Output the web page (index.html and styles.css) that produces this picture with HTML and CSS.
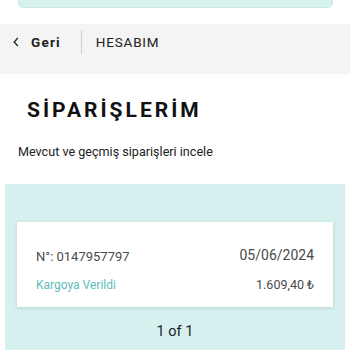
FILE: index.html
```html
<!DOCTYPE html>
<html lang="tr">
<head>
<meta charset="utf-8">
<link rel="stylesheet" href="styles.css">
</head>
<body>
  <div class="top-banner"></div>
  <nav class="crumbs">
    <a class="back">
      <svg class="chev" width="8" height="12" viewBox="0 0 8 12"><path d="M5.8 2 L2.2 6 L5.8 10" fill="none" stroke="#222" stroke-width="1.3"/></svg>
      <span class="back-label">Geri</span>
    </a>
    <span class="divider"></span>
    <span class="section">HESABIM</span>
  </nav>
  <header class="page-head">
    <h1 class="title">SİPARİŞLERİM</h1>
    <p class="subtitle">Mevcut ve geçmiş siparişleri incele</p>
  </header>
  <section class="orders">
    <div class="order-card">
      <div class="row">
        <span class="order-no">N°: 0147957797</span>
        <span class="order-date">05/06/2024</span>
      </div>
      <div class="row">
        <span class="status">Kargoya Verildi</span>
        <span class="price">1.609,40 ₺</span>
      </div>
    </div>
    <div class="pager">1 of 1</div>
  </section>
</body>
</html>
```
FILE: styles.css
```css
* { box-sizing: border-box; }
html, body { margin: 0; padding: 0; background: #fff; }
body {
  font-family: Roboto, "Noto Sans", "Liberation Sans", sans-serif;
  color: #222;
  width: 350px;
  height: 350px;
  overflow: hidden;
}
.top-banner {
  margin: 0 17px 0 18px;
  height: 8px;
  background: #d6f2ef;
  border: 1px solid #c6e9e5;
  border-top: none;
  border-radius: 0 0 6px 6px;
}
.crumbs {
  margin-top: 16px;
  height: 50px;
  background: #f4f4f4;
  display: flex;
  align-items: flex-start;
  padding: 6px 0 0 11px;
}
.back {
  display: flex;
  align-items: center;
  height: 24px;
  color: #222;
}
.chev {
  margin: 0 11px 0 1px;
}
.back-label {
  font-weight: 700;
  font-size: 13.5px;
  letter-spacing: 1.2px;
}
.divider {
  width: 1px;
  height: 24px;
  background: #cfcfcf;
  margin: 0 14px 0 20px;
}
.section {
  line-height: 24px;
  font-size: 13.5px;
  letter-spacing: 0.8px;
  color: #222;
}
.page-head { padding: 0 18px; }
.title {
  margin: 22px 0 0 9px;
  font-size: 21px;
  font-weight: 700;
  letter-spacing: 3px;
  line-height: 28px;
  color: #111;
}
.subtitle {
  margin: 19px 0 0;
  font-size: 12.6px;
  line-height: 18px;
  color: #222;
}
.orders {
  margin: 23px 5px 0;
  background: #d5f0ef;
  padding: 38px 12px 0;
  height: 200px;
}
.order-card {
  background: #fff;
  height: 85px;
  padding: 23px 19px 0;
  box-shadow: 0 1px 4px rgba(0,0,0,0.12);
}
.row {
  display: flex;
  justify-content: space-between;
  align-items: flex-start;
}
.row + .row { margin-top: 9px; }
.order-no {
  font-size: 13px;
  line-height: 20px;
  padding-top: 2px;
  color: #4a4a4a;
}
.order-date {
  font-size: 14px;
  line-height: 20px;
  color: #4a4a4a;
}
.status {
  font-size: 12px;
  line-height: 18px;
  color: #5dbdbd;
}
.price {
  font-size: 12.5px;
  line-height: 18px;
  color: #4a4a4a;
}
.pager {
  text-align: center;
  margin-top: 15px;
  font-size: 14.5px;
  line-height: 20px;
  color: #222;
}
```
